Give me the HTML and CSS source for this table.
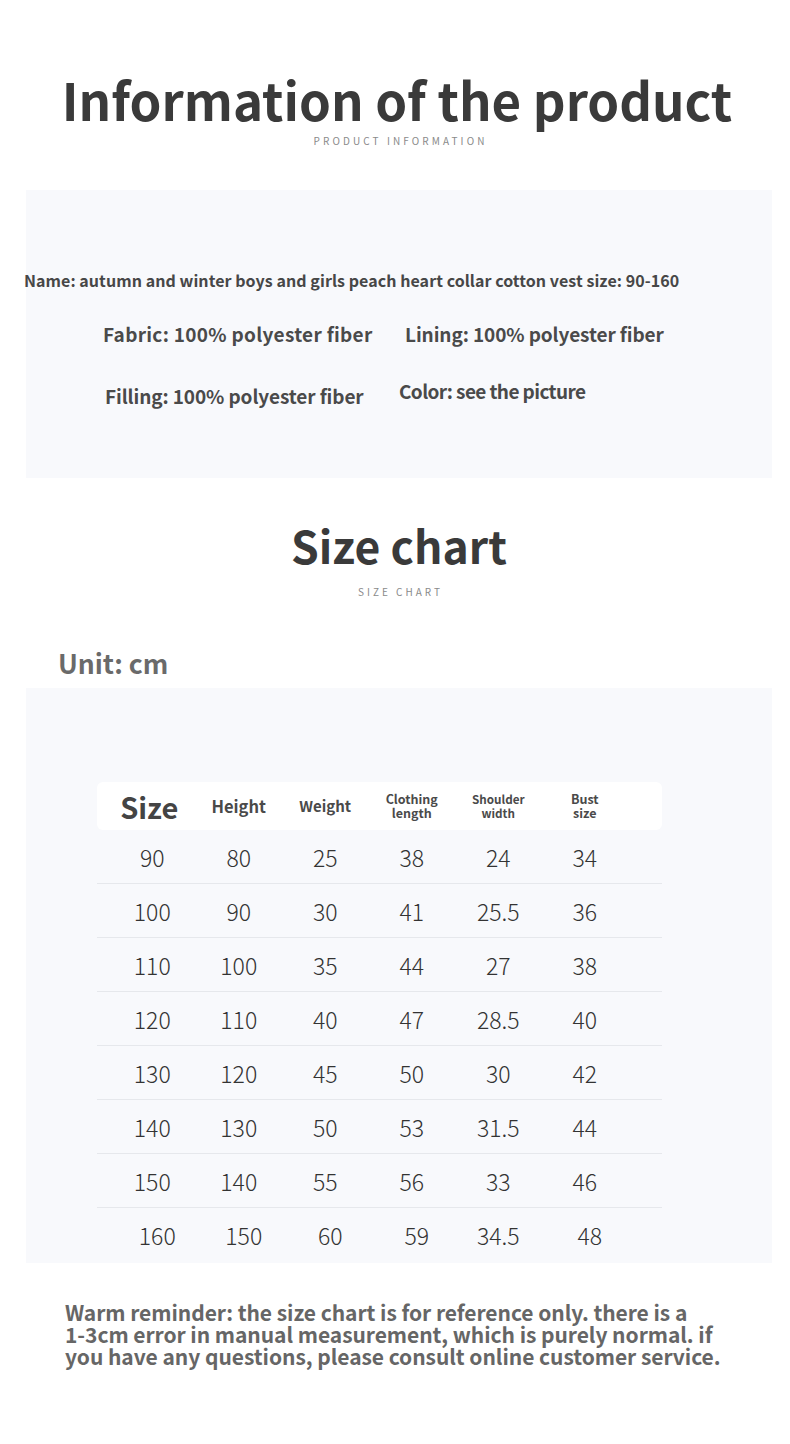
FILE: index.html
```html
<!DOCTYPE html>
<html>
<head>
<meta charset="utf-8">
<link rel="stylesheet" href="styles.css">
</head>
<body>
<div class="page">
  <header class="head head-info">
    <h1 class="title">Information of the product</h1>
    <div class="subtitle">PRODUCT INFORMATION</div>
  </header>

  <section class="panel info-panel">
    <p class="name-line">Name: autumn and winter boys and girls peach heart collar cotton vest size: 90-160</p>
    <div class="info-row row-a">
      <span class="cell c1">Fabric: 100% polyester fiber</span>
      <span class="cell c2">Lining: 100% polyester fiber</span>
    </div>
    <div class="info-row row-b">
      <span class="cell c3">Filling: 100% polyester fiber</span>
      <span class="cell c4">Color: see the picture</span>
    </div>
  </section>

  <header class="head head-size">
    <h2 class="title title-size">Size chart</h2>
    <div class="subtitle sub-size">SIZE CHART</div>
  </header>

  <div class="unit">Unit: cm</div>

  <section class="panel chart-panel">
    <div class="table">
      <div class="thead">
        <span class="th th-size">Size</span>
        <span class="th th-height">Height</span>
        <span class="th th-weight">Weight</span>
        <span class="th th-sm">Clothing<br>length</span>
        <span class="th th-xs">Shoulder<br>width</span>
        <span class="th th-sm">Bust<br>size</span>
      </div>
      <div class="tr"><span>90</span><span>80</span><span>25</span><span>38</span><span>24</span><span>34</span></div>
      <div class="tr"><span>100</span><span>90</span><span>30</span><span>41</span><span>25.5</span><span>36</span></div>
      <div class="tr"><span>110</span><span>100</span><span>35</span><span>44</span><span>27</span><span>38</span></div>
      <div class="tr"><span>120</span><span>110</span><span>40</span><span>47</span><span>28.5</span><span>40</span></div>
      <div class="tr"><span>130</span><span>120</span><span>45</span><span>50</span><span>30</span><span>42</span></div>
      <div class="tr"><span>140</span><span>130</span><span>50</span><span>53</span><span>31.5</span><span>44</span></div>
      <div class="tr"><span>150</span><span>140</span><span>55</span><span>56</span><span>33</span><span>46</span></div>
      <div class="tr tr-last"><span>160</span><span>150</span><span>60</span><span>59</span><span>34.5</span><span>48</span></div>
    </div>
  </section>

  <p class="reminder">Warm reminder: the size chart is for reference only. there is a<br>1-3cm error in manual measurement, which is purely normal. if<br>you have any questions, please consult online customer service.</p>
</div>
</body>
</html>
```

FILE: styles.css
```css
* { box-sizing: border-box; }
html, body { margin: 0; padding: 0; background: #ffffff; }
body {
  font-family: "Noto Sans CJK SC", "Noto Sans", sans-serif;
  color: #3c3c3c;
}
.page {
  width: 790px;
  height: 1444px;
  overflow: hidden;
  display: flex;
  flex-direction: column;
}
.head {
  display: flex;
  flex-direction: column;
  align-items: center;
}
.head-info { padding-top: 64px; padding-left: 4px; height: 190px; }
.title {
  margin: 0;
  font-size: 51px;
  font-weight: 700;
  line-height: 70px;
  color: #3a3a3a;
  letter-spacing: 0;
}
.subtitle {
  margin-top: 0;
  font-size: 10px;
  line-height: 14px;
  letter-spacing: 3.1px;
  color: #8a8a8a;
  padding-left: 7px;
}
.panel {
  margin-left: 26px;
  width: 746px;
  background: #f8f9fc;
}
.info-panel {
  height: 288px;
  padding-top: 78px;
}
.name-line {
  margin: 0 0 0 -2px;
  font-size: 16px;
  font-weight: 700;
  line-height: 24px;
  color: #474747;
  white-space: nowrap;
  letter-spacing: 0.06px;
}
.info-row {
  display: flex;
  font-size: 19px;
  font-weight: 700;
  color: #4a4a4a;
  white-space: nowrap;
}
.row-a { margin-top: 29px; }
.row-b { margin-top: 31px; }
.cell { display: block; line-height: 26px; }
.c1 { margin-left: 77px; width: 302px; letter-spacing: 0.3px; }
.c2 { letter-spacing: -0.1px; }
.c3 { margin-left: 79px; width: 294px; padding-top: 5px; letter-spacing: -0.1px; }
.c4 { letter-spacing: -0.6px; }
.head-size {
  padding-top: 37px;
  padding-left: 8px;
  height: 168px;
}
.title-size {
  font-size: 44.5px;
  line-height: 60px;
}
.sub-size { margin-top: 10px; letter-spacing: 3px; padding-left: 3px; }
.unit {
  padding-left: 58px;
  font-size: 26.5px;
  font-weight: 700;
  line-height: 34px;
  color: #6a6a6a;
  height: 42px;
}
.chart-panel {
  height: 575px;
  padding-top: 94px;
  padding-left: 71px;
}
.table { width: 565px; }
.thead {
  display: grid;
  grid-template-columns: 12px repeat(6, 86.5px);
  align-items: center;
  height: 48px;
  background: #ffffff;
  border-radius: 6px;
  color: #4a4a4a;
  font-weight: 700;
}
.thead::before { content: ""; }
.th { text-align: center; }
.th-size { font-size: 29px; line-height: 36px; color: #444; position: relative; left: -3px; }
.th-height { font-size: 16.5px; line-height: 22px; }
.th-weight { font-size: 15px; line-height: 22px; }
.th-sm { font-size: 12.5px; line-height: 14px; }
.th-xs { font-size: 11.7px; line-height: 14px; }
.tr {
  display: grid;
  grid-template-columns: 12px repeat(6, 86.5px);
  align-items: center;
  height: 54px;
  border-bottom: 1.5px solid #e6e8ec;
  font-size: 23px;
  font-weight: 300;
  color: #333;
}
.tr::before { content: ""; }
.tr span { text-align: center; }
.tr-last { border-bottom: 0; }
.tr-last span { position: relative; left: 5px; }
.tr-last span:nth-child(5) { left: 0; }
.reminder {
  margin: 38px 0 0 65px;
  font-size: 21px;
  font-weight: 700;
  line-height: 22px;
  color: #666666;
  letter-spacing: -0.05px;
}
```
